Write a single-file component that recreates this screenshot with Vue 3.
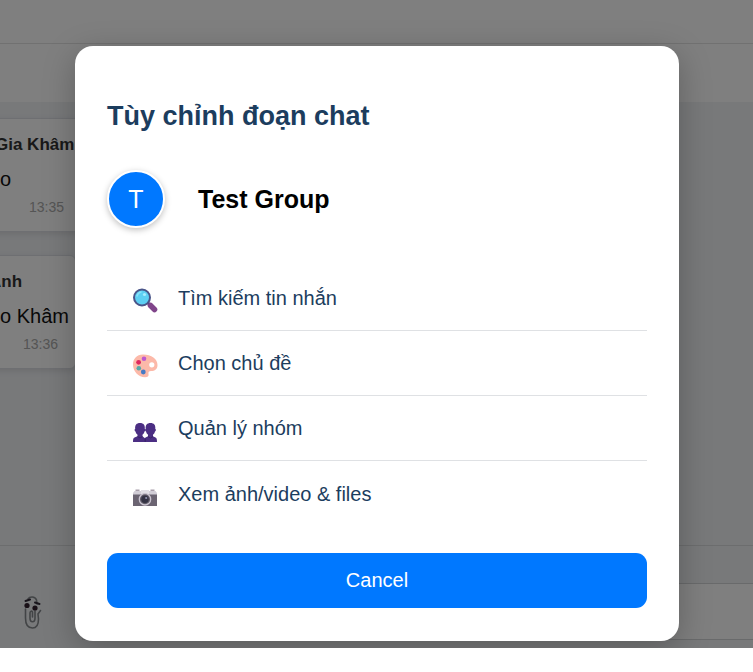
<script setup>
const messages = [
  { from: 'Gia Khâm', text: 'o', time: '13:35', size: 'wide' },
  { from: 'Anh', text: 'o Khâm', time: '13:36', size: 'narrow' },
]
const options = [
  { icon: 'search', label: 'Tìm kiếm tin nhắn' },
  { icon: 'palette', label: 'Chọn chủ đề' },
  { icon: 'people', label: 'Quản lý nhóm' },
  { icon: 'camera', label: 'Xem ảnh/video & files' },
]
</script>

<template>
  <div class="page">
    <div class="shell">
      <div class="topbar"></div>
      <header class="chat-header"></header>
      <main class="chat">
        <article v-for="m in messages" :key="m.time" class="bubble" :class="m.size">
          <strong class="from">{{ m.from }}</strong>
          <p class="text">{{ m.text }}</p>
          <time class="time">{{ m.time }}</time>
        </article>
      </main>
      <footer class="composer">
        <button class="attach" type="button" aria-label="Attach">
          <svg width="20" height="36" viewBox="0 0 20 36" fill="none">
            <path d="M6 5c1.500-2.500 7-3 8.500 1l.5 4M3.500 15v9c0 6 2.500 10 7 10s6-4 6-9l-.5-5 2.500-3.500M13 17v7c0 5-5 5-5 0v-5c0-2 2-2.500 2.500-1v5" stroke="#85898c" stroke-width="1.600" stroke-linecap="round" />
            <path d="M3.500 7 8 5.500M13 8.500l4.500 1.500" stroke="#332b38" stroke-width="2" stroke-linecap="round" />
            <circle cx="5" cy="11.500" r="2.600" fill="#32202f" />
            <circle cx="13" cy="14" r="2.600" fill="#32202f" />
          </svg>
        </button>
        <input class="message" type="text" aria-label="Message" />
      </footer>

      <div class="overlay">
        <section class="modal" role="dialog" aria-modal="true" aria-labelledby="dialog-title">
          <h2 id="dialog-title" class="title">Tùy chỉnh đoạn chat</h2>
          <div class="group">
            <span class="avatar">T</span>
            <h3 class="group-name">Test Group</h3>
          </div>
          <ul class="options">
            <li v-for="o in options" :key="o.icon">
              <button class="option" type="button">
                <svg v-if="o.icon === 'search'" class="icon" viewBox="0 0 26 26">
                  <path d="m16 15 2.500 2.500" stroke="#533b76" stroke-width="3" />
                  <path d="m18.500 17.500 4 4" stroke="#80458a" stroke-width="5.500" stroke-linecap="round" />
                  <circle cx="10" cy="9.500" r="8" fill="#5dcff3" stroke="#4a5589" stroke-width="2" />
                  <path d="M5 8c.5-2 2-3.500 4-4" fill="none" stroke="#89e3fa" stroke-width="1.500" stroke-linecap="round" />
                  <circle cx="12.500" cy="6.500" r="1.600" fill="#a6edff" />
                </svg>
                <svg v-else-if="o.icon === 'palette'" class="icon" viewBox="0 0 26 26">
                  <path fill-rule="evenodd" d="M11 1.500C4.500 1.500 1 6 1 11.500c0 7 5.500 12.700 12 12.700 2.700 0 4-1 3.500-3.200-.4-2 .5-3 2.500-3 4 0 6.500-2 6.500-6 0-6-6-10.500-14.500-10.500Zm8.800 7.700a2.600 2.600 0 1 1 0 5.200 2.600 2.600 0 0 1 0-5.200Z" fill="#fcb9a9" />
                  <circle cx="12" cy="5.700" r="2.300" fill="#bd57d0" />
                  <circle cx="6.600" cy="9.300" r="2.400" fill="#df285f" />
                  <circle cx="6.800" cy="15.300" r="2.300" fill="#54a8a8" />
                  <circle cx="11.300" cy="19" r="2.400" fill="#477bc5" />
                </svg>
                <svg v-else-if="o.icon === 'people'" class="icon" viewBox="0 -3 26 26">
                  <g fill="#4b2e83">
                    <path d="M8 2C4.500 2 2.800 4 3.200 8c-.9 0-.8 2 .3 2.600.4 1.500 1 2.500 2 3.200v1.500L2.500 16.500C1.400 17 1 18 1 21h12.500c0-3-.4-4-1.500-4.500l-1.500-1.200v-1.500c1-.7 1.600-1.700 2-3.200 1.100-.6 1.200-2.600.3-2.600C13.200 4 11.500 2 8 2Z" />
                    <path d="M18.500 2c-3.500 0-5.200 2-4.800 6-.9 0-.8 2 .3 2.600.4 1.500 1 2.500 2 3.200v1.500l-2.500 1.200c-.7.500-.7 1.500-.7 4.500H25c0-3-.4-4-1.500-4.500L21 15.300v-1.500c1-.7 1.600-1.700 2-3.200 1.100-.6 1.200-2.600.3-2.600.4-4-1.300-6-4.800-6Z" />
                  </g>
                  <path d="m5.500 15.500 2.500 1.500 2.500-1.500M16 15.500l2.500 1.500 2.500-1.500M13.200 17.500V21" fill="none" stroke="#34205f" stroke-width=".8" />
                </svg>
                <svg v-else class="icon" viewBox="0 -4 26 26">
                  <path d="M3.500 2.500h4V4h-4zM18.500 2.500h4V4h-4z" fill="#a99fab" />
                  <path d="M1 6 2.500 4h21L25 6v2.500H1Z" fill="#d2ced7" />
                  <path d="M9 3h8v5H9z" fill="#e1dfe5" />
                  <path d="M1 7.500h24V19H1Z" fill="#6b6472" />
                  <circle cx="13" cy="12.300" r="5.700" fill="#605b68" stroke="#c9c3cf" stroke-width="1.300" />
                  <circle cx="13" cy="12.300" r="3.700" fill="#343344" />
                  <circle cx="14.200" cy="11" r="1.100" fill="#9293b0" />
                </svg>
                <span>{{ o.label }}</span>
              </button>
            </li>
          </ul>
          <button class="cancel" type="button">Cancel</button>
        </section>
      </div>
    </div>
  </div>
</template>

<style>
body {
  background: #fff;
}
</style>

<style scoped>
.page {
  box-sizing: border-box;
  min-height: 100vh;
  padding-bottom: 24px;
  display: flex;
  font-family: "Liberation Sans", Arial, sans-serif;
}
.page * {
  box-sizing: border-box;
}
button,
input {
  font: inherit;
}
.shell {
  position: relative;
  flex: 1;
  min-width: 0;
  display: flex;
  flex-direction: column;
  overflow: hidden;
  background: #f0f2f5;
}
.topbar {
  height: 44px;
  background: #fff;
  border-bottom: 1px solid #e2e2e2;
}
.chat-header {
  height: 58px;
  background: #fff;
}
.chat {
  flex: 1;
  display: flex;
  flex-direction: column;
  align-items: flex-start;
  gap: 23px;
  padding-top: 16px;
}
.bubble {
  display: flex;
  flex-direction: column;
  margin-left: -12px;
  padding: 16px 17px 16px 12px;
  background: #fff;
  border: 1px solid #dcdfe4;
  border-radius: 6px;
  box-shadow: 0 2px 6px rgba(0, 0, 0, 0.1);
}
.wide {
  width: 94px;
}
.narrow {
  width: 88px;
}
.from {
  font-size: 17px;
  line-height: 20px;
  color: #333;
  white-space: nowrap;
}
.wide .from {
  margin-left: -6px;
}
.narrow .from {
  margin-left: -12px;
}
.text {
  margin: 12px 0 8px -1px;
  font-size: 20px;
  line-height: 24px;
  color: #111;
  white-space: nowrap;
}
.time {
  align-self: flex-end;
  font-size: 14px;
  line-height: 16px;
  color: #aaa;
}
.composer {
  display: flex;
  align-items: center;
  gap: 40px;
  padding: 37px 0 8px 22px;
  border-top: 1px solid #d8dadd;
}
.attach {
  padding: 0;
  border: 0;
  background: none;
  display: flex;
}
.message {
  flex: 1;
  min-width: 0;
  height: 57px;
  border: 1px solid #d2d4d7;
  border-right: 0;
  background: #fff;
}
.overlay {
  position: absolute;
  inset: 0;
  display: flex;
  align-items: flex-end;
  justify-content: center;
  padding: 7px 74px 7px 75px;
  background: rgba(0, 0, 0, 0.5);
}
.modal {
  width: 100%;
  max-width: 604px;
  padding: 53px 32px 33px;
  background: #fff;
  border-radius: 18px;
  box-shadow: 0 8px 32px rgba(0, 0, 0, 0.25);
}
.title {
  margin: 0 0 37px;
  font-size: 27px;
  line-height: 34px;
  color: #1c3d5e;
}
.group {
  display: flex;
  align-items: center;
  gap: 33px;
  margin-bottom: 38px;
}
.avatar {
  width: 58px;
  height: 58px;
  display: flex;
  align-items: center;
  justify-content: center;
  border: 2px solid #fff;
  border-radius: 50%;
  background: #0078ff;
  color: #fff;
  font-size: 25px;
  box-shadow: 0 2px 6px rgba(0, 0, 0, 0.25);
}
.group-name {
  margin: 0;
  font-size: 25px;
  line-height: 30px;
  color: #000;
}
.options {
  list-style: none;
  margin: 0 0 27px;
  padding: 0;
}
.options li {
  display: flex;
  height: 65px;
  border-bottom: 1px solid #dfe1e4;
}
.options li:last-child {
  border-bottom: 0;
}
.option {
  width: 100%;
  display: flex;
  align-items: center;
  gap: 20px;
  padding: 0 25px;
  border: 0;
  background: none;
  color: #1c3d5e;
  font-size: 20px;
  line-height: 24px;
  text-align: left;
}
.icon {
  width: 26px;
  height: 26px;
  margin-top: 5px;
}
.cancel {
  display: block;
  width: 100%;
  height: 55px;
  border: 0;
  border-radius: 11px;
  background: #0078ff;
  color: #fff;
  font-size: 20px;
}
</style>
